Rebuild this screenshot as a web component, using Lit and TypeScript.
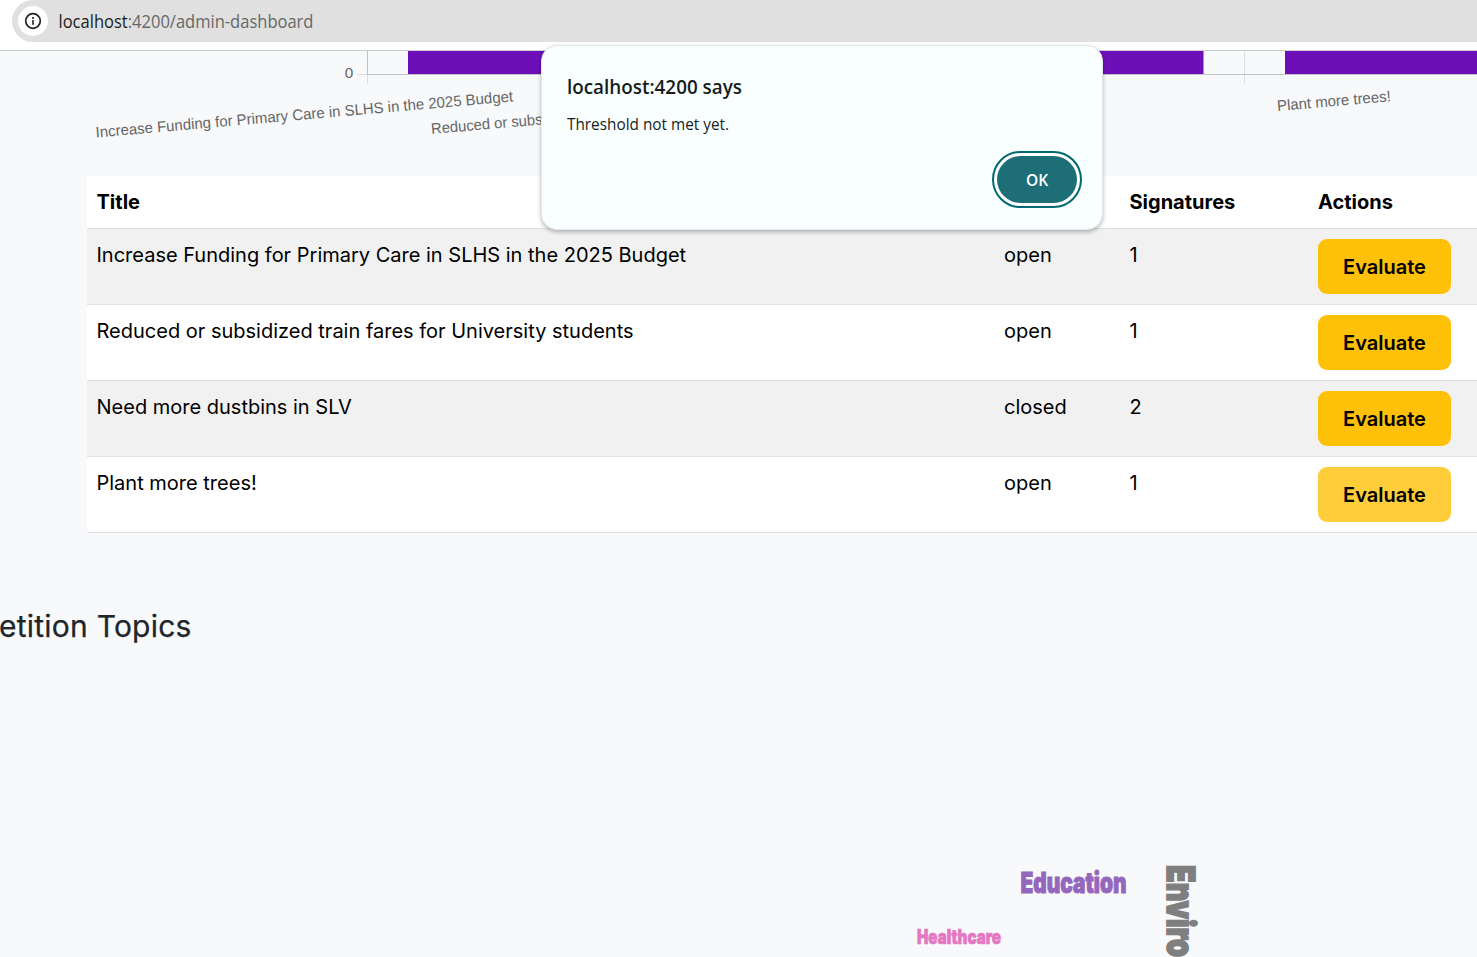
import { LitElement, html, svg, css } from "lit";
import { customElement } from "lit/decorators.js";

@customElement("address-bar")
class AddressBar extends LitElement {
  static styles = css`
    :host { display: block; height: 50px; flex: none; background: #fff; border-bottom: 1px solid #c9cccc; }
    .pill { display: flex; align-items: center; height: 42px; margin-left: 12px; padding-left: 6px; background: #e0e0e0; border-radius: 21px 0 0 21px; }
    .info { width: 30px; height: 30px; border-radius: 50%; background: #fff; display: flex; align-items: center; justify-content: center; }
    .url { margin-left: 10px; font: 400 18px/42px "Open Sans", sans-serif; }
    .url text { fill: #666868; }
    .url .host { fill: #1c1f20; }
  `;
  render() {
    return html`<div class="pill">
      <span class="info"><svg width="18" height="18" viewBox="0 0 18 18">
        <circle cx="9" cy="9" r="7.3" fill="none" stroke="#222" stroke-width="1.7" />
        <rect x="8.2" y="8" width="1.6" height="4.8" fill="#222" />
        <rect x="8.1" y="5" width="1.8" height="1.8" fill="#222" />
      </svg></span>
      <svg class="url" width="300" height="42"><text x="0.5" y="28" textLength="255" lengthAdjust="spacingAndGlyphs"><tspan class="host">localhost</tspan>:4200/admin-dashboard</text></svg>
    </div>`;
  }
}

@customElement("petition-chart")
class PetitionChart extends LitElement {
  static styles = css`
    :host { display: block; height: 125px; flex: none; }
    svg { display: block; }
    text { font: 15.3px "Liberation Sans", Arial, sans-serif; fill: #666; }
    .bar { fill: #6c0fb8; }
  `;
  labels = [
    { x: 96, y: 86.5, w: 419, t: "Increase Funding for Primary Care in SLHS in the 2025 Budget" },
    { x: 431.5, y: 83, w: 115, t: "Reduced or subsi" },
    { x: 1277.5, y: 60, w: 114, t: "Plant more trees!" },
  ];
  render() {
    return html`<svg width="1477" height="125">
      <rect x="357" y="23" width="10" height="1" fill="#dcdee0" />
      <rect x="367" y="0" width="1" height="24" fill="#bfc1c4" />
      <rect x="367" y="24" width="1" height="9" fill="#dcdee0" />
      <rect x="1244" y="0" width="1" height="33" fill="#dcdee0" />
      ${[408, 846.5, 1285].map((x) => svg`<rect class="bar" x=${x} y="0" width="357" height="23" />`)}
      <rect x="367" y="23" width="1110" height="1" fill="#bfc1c4" />
      <text x="344.7" y="27">0</text>
      ${this.labels.map((l) => svg`<text transform="translate(${l.x} ${l.y}) rotate(-4.95)" textLength=${l.w} lengthAdjust="spacingAndGlyphs">${l.t}</text>`)}
    </svg>`;
  }
}

@customElement("petition-table")
class PetitionTable extends LitElement {
  static styles = css`
    :host { display: block; flex: none; margin-left: 87px; font: 20px/30px Inter, sans-serif; color: #000; }
    .row { display: grid; grid-template-columns: 907.5px 125.5px 188.5px 1fr; height: 75px; background: #fff; border-bottom: 1px solid #dee2e6; align-items: start; }
    .row > span { padding: 11px 0 0 9.5px; white-space: nowrap; }
    .row > .action { padding: 10px 0 0 9.5px; }
    .odd { background: #f1f1f1; }
    .head { height: 52px; font-weight: 700; }
    button { display: block; width: 133px; height: 55px; border: 0; border-radius: 9px; padding: 0; background: #ffc107; color: #000; font: 600 20px/57px Inter, sans-serif; }
    .hover { background: #ffcd39; }
  `;
  rows: [string, string, number][] = [
    ["Increase Funding for Primary Care in SLHS in the 2025 Budget", "open", 1],
    ["Reduced or subsidized train fares for University students", "open", 1],
    ["Need more dustbins in SLV", "closed", 2],
    ["Plant more trees!", "open", 1],
  ];
  render() {
    return html`<div class="row head"><span>Title</span><span>Status</span><span>Signatures</span><span>Actions</span></div>
      ${this.rows.map(([title, status, count], i) => html`<div class="row ${i % 2 ? "" : "odd"}">
        <span>${title}</span><span>${status}</span><span>${count}</span>
        <span class="action"><button class=${i === 3 ? "hover" : ""}>Evaluate</button></span>
      </div>`)}`;
  }
}

@customElement("topic-cloud")
class TopicCloud extends LitElement {
  static styles = css`
    :host { display: block; flex: none; }
    svg { display: block; }
    text { font-family: Impact, Inter, sans-serif; font-weight: 900; }
  `;
  words = [
    { x: 1020.5, y: 42.5, r: 0, s: 28, k: 1, w: 106, c: "#9467bd", t: "Education" },
    { x: 917, y: 93.5, r: 0, s: 20, k: 0.7, w: 84, c: "#e377c2", t: "Healthcare" },
    { x: 1167, y: 15, r: 90, s: 39, k: 1.8, w: 92, c: "#7f7f7f", t: "Enviro" },
  ];
  render() {
    return html`<svg width="1477" height="107">
      ${this.words.map((w) => svg`<text transform="translate(${w.x} ${w.y}) rotate(${w.r})" font-size=${w.s} fill=${w.c} stroke=${w.c} stroke-width=${w.k} textLength=${w.w} lengthAdjust="spacingAndGlyphs">${w.t}</text>`)}
    </svg>`;
  }
}

@customElement("alert-dialog")
class AlertDialog extends LitElement {
  static styles = css`
    :host { position: absolute; left: 541px; top: 45px; width: 562px; height: 185px; box-sizing: border-box; border: 1.5px solid #dfe7e8; border-top-width: 1px; border-radius: 16px; background: #f8fffe; box-shadow: 0 2px 4px rgba(0, 0, 0, 0.28); display: flex; flex-direction: column; padding: 26px 20px 0 25px; font-family: "Open Sans", sans-serif; color: #191c1d; }
    svg { display: block; flex: none; }
    .title { font-weight: 600; font-size: 19px; }
    .body { font-size: 15.5px; }
    text { fill: #191c1d; }
    button { align-self: flex-end; margin-top: 16px; width: 90px; height: 57px; box-sizing: border-box; border: 2px solid #00696f; border-radius: 29px; padding: 3px; background: #fff; }
    .fill { display: block; height: 47px; border-radius: 24px; background: #1e6e78; color: #fff; font: 600 15.5px/48px "Open Sans", sans-serif; }
  `;
  render() {
    return html`
      <svg class="title" width="300" height="30"><text x="0" y="22" textLength="175" lengthAdjust="spacingAndGlyphs">localhost:4200 says</text></svg>
      <svg class="body" width="300" height="33"><text x="0" y="28" textLength="162" lengthAdjust="spacingAndGlyphs">Threshold not met yet.</text></svg>
      <button><span class="fill">OK</span></button>`;
  }
}

@customElement("app-root")
class AppRoot extends LitElement {
  static styles = css`
    :host { display: flex; flex-direction: column; position: relative; width: 1477px; height: 957px; overflow: hidden; background: #f8f9fb; }
    h2 { margin: 73px 0 0 -1px; height: 244px; flex: none; font: 400 30px/40px Inter, sans-serif; letter-spacing: 0.23px; color: #212529; -webkit-text-stroke: 0.25px #212529; }
  `;
  render() {
    return html`<address-bar></address-bar>
      <petition-chart></petition-chart>
      <petition-table></petition-table>
      <h2>etition Topics</h2>
      <topic-cloud></topic-cloud>
      <alert-dialog></alert-dialog>`;
  }
}
